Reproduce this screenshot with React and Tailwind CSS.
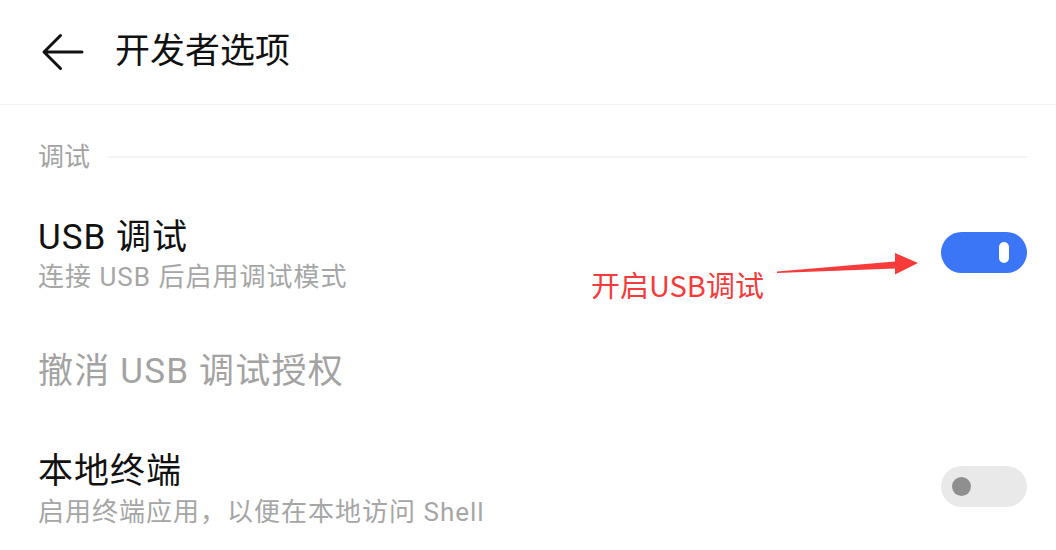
const font = { fontFamily: 'Roboto, "Noto Sans CJK SC", sans-serif' };

function Toggle({ on, className = "" }) {
  if (on) {
    return (
      <div className={`w-[86px] h-[41px] rounded-full bg-[#3a76f6] flex items-center justify-end pr-[18px] shrink-0 ${className}`}>
        <div className="w-[10px] h-[21px] rounded-full bg-white" />
      </div>
    );
  }
  return (
    <div className={`w-[86px] h-[41px] rounded-full bg-[#e9e9e9] flex items-center pl-[11px] shrink-0 ${className}`}>
      <div className="w-[19px] h-[19px] rounded-full bg-[#8f8f8f]" />
    </div>
  );
}

export default function App() {
  return (
    <div className="relative w-[1056px] h-[550px] bg-white overflow-hidden" style={font}>
      {/* Header */}
      <header className="h-[105px] flex items-center border-b border-[#f3f3f3]">
        <svg className="ml-[41px]" width="44" height="38" viewBox="0 0 44 38" fill="none">
          <path d="M3 19 H41 M19.5 2.5 L3 19 L19.5 35.5" stroke="#111" strokeWidth="3" strokeLinecap="round" strokeLinejoin="round" />
        </svg>
        <h1 className="ml-[30px] text-[35px] leading-[40px] text-[#111]">开发者选项</h1>
      </header>

      <div className="pl-[38px] pr-[29px]">
        {/* Section label */}
        <div className="h-[104px] flex items-center gap-[18px]">
          <span className="text-[26px] leading-[32px] text-[#a3a3a3]">调试</span>
          <div className="flex-1 h-[2px] bg-[#f4f4f4]" />
        </div>

        {/* USB debugging */}
        <div className="h-[94px] flex items-center justify-between">
          <div className="pt-[2px]">
            <div className="text-[35px] leading-[40px] tracking-[1px] text-[#111]">USB 调试</div>
            <div className="text-[26px] leading-[38px] tracking-[1px] text-[#a6a6a6]">连接 USB 后启用调试模式</div>
          </div>
          <Toggle on className="mb-[8px]" />
        </div>

        {/* Revoke */}
        <div className="h-[134px] flex items-center">
          <div className="pt-[3px] text-[35px] leading-[40px] tracking-[1.2px] text-[#a3a3a3]">撤消 USB 调试授权</div>
        </div>

        {/* Local terminal */}
        <div className="h-[107px] flex items-center justify-between">
          <div className="pt-[2px]">
            <div className="text-[35px] leading-[40px] tracking-[1px] text-[#111]">本地终端</div>
            <div className="text-[26px] leading-[40px] tracking-[1px] text-[#a6a6a6]">启用终端应用，以便在本地访问 Shell</div>
          </div>
          <Toggle className="mb-[9px]" />
        </div>
      </div>

      {/* Annotation */}
      <div className="absolute left-[591px] top-[264px] text-[29px] leading-[40px] text-[#f53b3b]" style={{ fontFamily: '"Noto Sans CJK SC", sans-serif' }}>
        开启USB调试
      </div>
      <svg className="absolute left-0 top-0 pointer-events-none" width="1056" height="550">
        <polygon points="777,271.5 895,261.5 895,253 918,263 895,274.5 895,268.5 777,273" fill="#f73b3b" />
      </svg>
    </div>
  );
}
